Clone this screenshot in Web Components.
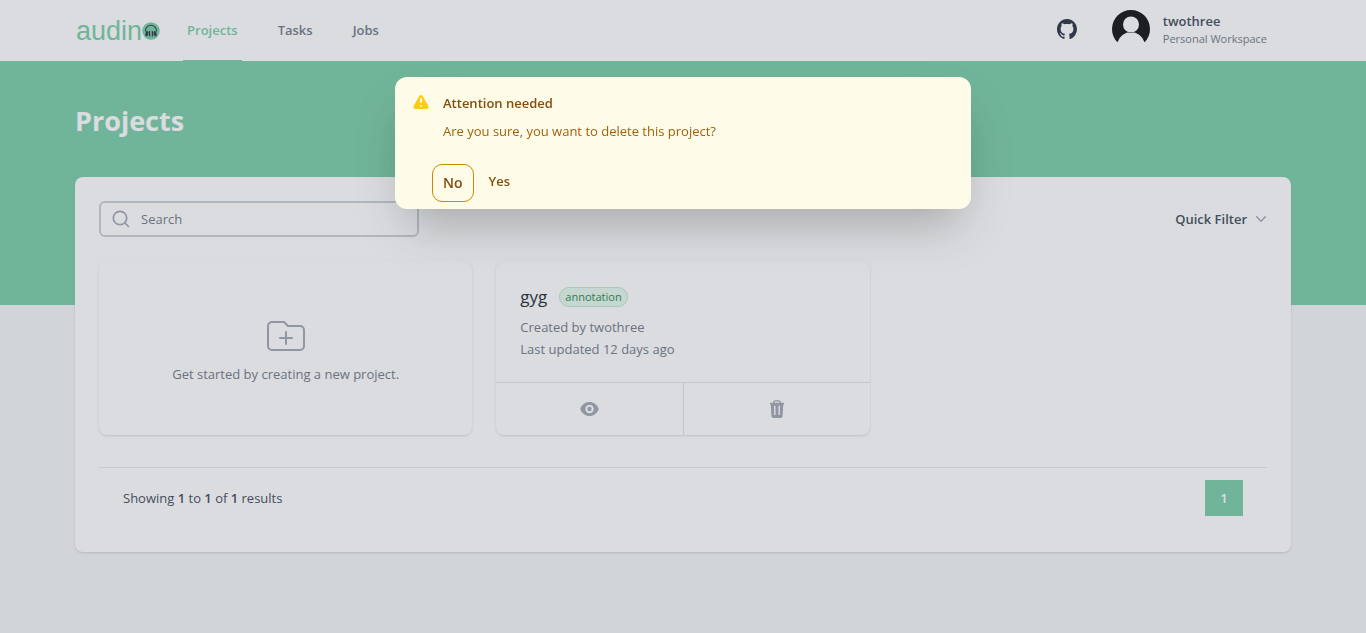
<!DOCTYPE html>
<html lang="en">
<head>
<meta charset="utf-8">
<meta name="viewport" content="width=device-width, initial-scale=1">
<title>Projects - audino</title>
<style>
  :root {
    --brand: #72cba3;
    --gray-100: #f3f4f6;
    --gray-200: #e5e7eb;
    --gray-400: #9ca3af;
    --gray-500: #6b7280;
    --gray-700: #374151;
    --gray-900: #111827;
  }
  body {
    margin: 0;
    min-height: 100vh;
    background: var(--gray-100);
    font: 13px/20px "Open Sans", "Noto Sans", sans-serif;
    color: var(--gray-700);
  }
</style>
</head>
<body>
<audino-app></audino-app>

<script>
const define = (name, html) => {
  const template = document.createElement('template');
  template.innerHTML = html;
  customElements.define(name, class extends HTMLElement {
    constructor() {
      super();
      this.attachShadow({ mode: 'open' }).append(template.content.cloneNode(true));
    }
  });
};

define('audino-logo', `
  <style>
    :host { display: block; }
    a { display: flex; align-items: center; color: var(--brand); text-decoration: none;
        font: 27px/28px "Liberation Sans", Arial, sans-serif; }
    svg { display: block; width: 18px; height: 18px; }
  </style>
  <a href="#" aria-label="audino home"><span>audin</span>
    <svg viewBox="0 0 18 18" aria-hidden="true">
      <circle cx="9" cy="9" r="8.7" fill="var(--brand)"/>
      <path d="M3.500 9.500V8.700a5.500 5.500 0 0 1 11 0v.8" fill="none" stroke="#262b36" stroke-width="1.100"/>
      <ellipse cx="4.900" cy="11.700" rx="1.500" ry="2.700" fill="#262b36" transform="rotate(12 4.900 11.700)"/>
      <rect x="6.900" y="8.900" width="1.300" height="5.600" rx=".6" fill="#262b36"/>
      <rect x="9.800" y="8.900" width="1.300" height="5.600" rx=".6" fill="#262b36"/>
      <ellipse cx="13.100" cy="11.700" rx="1.500" ry="2.700" fill="#262b36" transform="rotate(-12 13.100 11.700)"/>
    </svg></a>`);

define('nav-tab', `
  <style>
    :host { display: flex; }
    a { display: flex; align-items: center; padding: 0 4px; color: var(--gray-500);
        font-weight: 600; text-decoration: none; border-bottom: 1px solid transparent; }
    :host([active]) a { color: var(--brand); border-color: var(--brand); }
  </style>
  <a href="#"><slot></slot></a>`);

define('user-menu', `
  <style>
    :host { display: block; }
    button { display: flex; align-items: center; gap: 12px; padding: 0; border: 0;
             background: none; font: inherit; text-align: left; }
    svg { width: 40px; height: 40px; }
    .text { display: block; padding-top: 2px; }
    .name { display: block; font-weight: 600; line-height: 18px; color: var(--gray-700); }
    .space { display: block; font-size: 11px; line-height: 18px; color: var(--gray-500); }
  </style>
  <button type="button">
    <svg viewBox="0 0 40 40" aria-hidden="true">
      <path fill="#020204" fill-rule="evenodd" d="M6.500 33.350A19 19 0 1 1 33.500 33.350A14 14 0 0 0 6.500 33.350ZM20 7.500a8 8 0 1 0 0 16a8 8 0 0 0 0-16Z"/>
    </svg>
    <span class="text"><span class="name"><slot name="name"></slot></span><span class="space"><slot name="space"></slot></span></span>
  </button>`);

define('site-header', `
  <style>
    :host { display: block; background: #fff; }
    .bar { display: flex; box-sizing: border-box; height: 61px; max-width: 1280px; margin: 0 auto; padding: 0 56px 0 33px; }
    audino-logo { align-self: center; margin-right: 23px; }
    nav { display: flex; gap: 32px; }
    .right { display: flex; align-items: center; gap: 34px; margin-left: auto; padding-bottom: 3px; }
    .git { display: block; color: #1b2436; }
    .git svg { display: block; width: 20px; height: 20px; }
  </style>
  <div class="bar">
    <audino-logo></audino-logo>
    <nav aria-label="Main">
      <nav-tab active>Projects</nav-tab><nav-tab>Tasks</nav-tab><nav-tab>Jobs</nav-tab>
    </nav>
    <div class="right">
      <a class="git" href="#" aria-label="GitHub"><svg viewBox="0 0 24 24" fill="currentColor" aria-hidden="true"><path fill-rule="evenodd" clip-rule="evenodd" d="M12 0C5.37 0 0 5.506 0 12.303c0 5.445 3.435 10.043 8.205 11.674.6.107.825-.262.825-.585 0-.292-.015-1.261-.015-2.291C6 21.67 5.22 20.346 4.98 19.654c-.135-.354-.72-1.446-1.23-1.738-.42-.23-1.02-.8-.015-.815.945-.015 1.62.892 1.845 1.261 1.08 1.86 2.805 1.338 3.495 1.015.105-.8.42-1.338.765-1.645-2.67-.308-5.46-1.37-5.46-6.075 0-1.338.465-2.446 1.23-3.307-.12-.308-.54-1.569.12-3.26 0 0 1.005-.323 3.3 1.26.96-.276 1.98-.415 3-.415s2.04.139 3 .416c2.295-1.6 3.3-1.261 3.3-1.261.66 1.691.24 2.952.12 3.26.765.861 1.23 1.953 1.23 3.307 0 4.721-2.805 5.767-5.475 6.075.435.384.81 1.122.81 2.276 0 1.645-.015 2.968-.015 3.383 0 .323.225.707.825.585a12.047 12.047 0 0 0 5.919-4.489A12.537 12.537 0 0 0 24 12.304C24 5.505 18.63 0 12 0Z"/></svg></a>
      <user-menu><span slot="name">twothree</span><span slot="space">Personal Workspace</span></user-menu>
    </div>
  </div>`);

define('search-box', `
  <style>
    :host { display: block; width: 320px; }
    .field { display: flex; align-items: center; gap: 10px; box-sizing: border-box; height: 36px;
             padding: 0 10px; border: 2px solid #c7ced3; border-radius: 6px; color: var(--gray-400); }
    svg { display: block; flex: none; width: 20px; height: 20px; }
    input { flex: 1; min-width: 0; padding: 0; border: 0; outline: 0; background: none; font: inherit; color: var(--gray-700); }
    input::placeholder { color: var(--gray-500); opacity: 1; }
  </style>
  <label class="field">
    <svg viewBox="0 0 20 20" fill="none" stroke="currentColor" stroke-width="1.700" stroke-linecap="round" aria-hidden="true"><circle cx="9" cy="9" r="6.700"/><path d="m14 14 3.500 3.500"/></svg>
    <input type="search" aria-label="Search" placeholder="Search">
  </label>`);

define('quick-filter', `
  <style>
    :host { display: block; }
    button { display: flex; align-items: center; gap: 4px; padding: 0; border: 0; background: none;
             font: inherit; font-weight: 600; color: var(--gray-700); }
    svg { display: block; width: 20px; height: 20px; margin-right: -4px; color: var(--gray-400); }
  </style>
  <button type="button"><slot></slot>
    <svg viewBox="0 0 20 20" fill="currentColor" aria-hidden="true"><path fill-rule="evenodd" d="M5.23 7.21a.75.75 0 0 1 1.06.02L10 11.168l3.71-3.938a.75.75 0 1 1 1.08 1.04l-4.25 4.5a.75.75 0 0 1-1.08 0l-4.25-4.5a.75.75 0 0 1 .02-1.06Z"/></svg>
  </button>`);

define('new-project-card', `
  <style>
    :host { display: grid; border-radius: 8px; box-shadow: 0 1px 3px rgba(0,0,0,.1), 0 1px 2px rgba(0,0,0,.06); }
    button { display: flex; flex-direction: column; align-items: center; justify-content: center; gap: 4px;
             border: 0; padding: 0; background: none; font: inherit; color: var(--gray-500); }
    svg { display: block; width: 48px; height: 48px; color: var(--gray-400); }
  </style>
  <button type="button">
    <svg viewBox="0 0 24 24" fill="none" stroke="currentColor" aria-hidden="true"><path stroke-linecap="round" stroke-linejoin="round" d="M9 13h6m-3-3v6m-9 1V7a2 2 0 0 1 2-2h6l2 2h6a2 2 0 0 1 2 2v8a2 2 0 0 1-2 2H5a2 2 0 0 1-2-2Z"/></svg>
    <slot></slot>
  </button>`);

define('project-card', `
  <style>
    :host { display: block; border-radius: 8px; box-shadow: 0 1px 3px rgba(0,0,0,.1), 0 1px 2px rgba(0,0,0,.06); }
    .body { padding: 24px 24px 22px; line-height: 22px; color: var(--gray-500); }
    header { display: flex; align-items: center; gap: 12px; height: 24px; margin-bottom: 7px; }
    h2 { margin: 0; font-size: 17px; line-height: 24px; font-weight: 500; color: var(--gray-900); }
    .tag { padding: 0 5px; border: 1px solid #b9e6cb; border-radius: 10px; background: #e4f8ec;
           font-size: 11px; line-height: 18px; font-weight: 500; color: #15803d; }
    p { margin: 0; }
    .actions { display: grid; grid-template-columns: 1fr 1fr; border-top: 1px solid #e0e2ea; }
    button { display: flex; align-items: center; justify-content: center; height: 52px; padding: 0;
             border: 0; background: none; color: var(--gray-400); }
    button + button { border-left: 1px solid #e0e2ea; }
    svg { display: block; width: 20px; height: 20px; }
  </style>
  <div class="body">
    <header><h2><slot name="title"></slot></h2><span class="tag"><slot name="tag"></slot></span></header>
    <p><slot name="author"></slot></p>
    <p><slot name="updated"></slot></p>
  </div>
  <div class="actions">
    <button type="button" aria-label="View project"><svg viewBox="0 0 20 20" fill="currentColor" aria-hidden="true"><path fill-rule="evenodd" d="M9.500 3C5.300 3 1.700 5.700.2 10c1.500 4.300 5.100 7 9.300 7s7.800-2.700 9.300-7C17.300 5.700 13.700 3 9.500 3Zm0 2.800a4.200 4.200 0 1 1 0 8.400 4.200 4.200 0 0 1 0-8.400Z"/><circle cx="9.500" cy="10" r="2.200"/></svg></button>
    <button type="button" aria-label="Delete project"><svg viewBox="0 0 20 20" aria-hidden="true"><path d="M6.700 4V3.200c0-.8.600-1.400 1.400-1.400h3.800c.8 0 1.400.6 1.400 1.400V4" fill="none" stroke="currentColor" stroke-width="1.300"/><path fill="currentColor" fill-rule="evenodd" d="M3 3.800h14v1.600h-.7l-.8 11.800c-.1 1-.8 1.700-1.800 1.700H6.300c-1 0-1.700-.7-1.800-1.700L3.700 5.400H3Zm4.100 3v9.200h1.400V6.800Zm4.400 0v9.200h1.400V6.800Z"/></svg></button>
  </div>`);

define('page-footer', `
  <style>
    :host { display: flex; align-items: center; justify-content: space-between; padding: 12px 24px; border-top: 1px solid var(--gray-200); }
    p { margin: 0; }
    b { font-weight: 600; }
    button { width: 38px; height: 36px; padding: 0; border: 0; background: var(--brand); color: #fff; font: inherit; font-weight: 600; }
  </style>
  <p>Showing <b>1</b> to <b>1</b> of <b>1</b> results</p>
  <nav aria-label="Pagination"><button type="button" aria-current="page">1</button></nav>`);

define('confirm-dialog', `
  <style>
    :host { position: fixed; inset: 0; display: block; padding: 77px 16px 16px; background: rgba(107,114,128,.25); }
    dialog { position: static; display: block; box-sizing: border-box; max-width: 576px; width: 100%; margin: 0 auto;
             padding: 16px 16px 7px; border: 0; border-radius: 12px; background: #fefce8; color: #854d0e;
             box-shadow: 0 25px 50px -12px rgba(0,0,0,.25); }
    .message { display: flex; gap: 12px; }
    svg { display: block; flex: none; width: 20px; height: 20px; color: #facc15; }
    h2 { margin: 0 0 8px; font-size: 13px; line-height: 20px; font-weight: 600; }
    p { margin: 0; color: #a16207; }
    .actions { display: flex; align-items: center; gap: 4px; margin-top: 23px; padding-left: 21px; }
    button { height: 38px; padding: 0 10px; border: 1px solid transparent; border-radius: 10px; background: none;
             font: inherit; font-weight: 600; color: inherit; }
    .no { border-color: #ca8a04; font-size: 14px; }
    .yes { height: 34px; align-self: start; }
  </style>
  <dialog open aria-labelledby="t">
    <div class="message">
      <svg viewBox="0 0 20 20" fill="currentColor" aria-hidden="true"><path fill-rule="evenodd" d="M8.257 3.099c.765-1.360 2.722-1.360 3.486 0l5.580 9.920c.750 1.334-.213 2.980-1.742 2.980H4.420c-1.530 0-2.493-1.646-1.743-2.980l5.580-9.920ZM11 13a1 1 0 1 1-2 0 1 1 0 0 1 2 0Zm-1-8a1 1 0 0 0-1 1v3a1 1 0 0 0 2 0V6a1 1 0 0 0-1-1Z"/></svg>
      <div><h2 id="t"><slot name="title"></slot></h2><p><slot></slot></p></div>
    </div>
    <div class="actions"><button class="no" type="button">No</button><button class="yes" type="button">Yes</button></div>
  </dialog>`);

define('audino-app', `
  <style>
    :host { display: block; }
    .band { padding: 42px 32px 166px; background: var(--brand); }
    .wrap { max-width: 1216px; margin: 0 auto; }
    h1 { margin: 0; font-size: 27px; line-height: 36px; font-weight: 700; color: #fff; }
    main { margin-top: -128px; padding: 0 32px 48px; }
    .panel { box-sizing: border-box; padding: 24px; border-radius: 8px; background: #fff;
             box-shadow: 0 1px 3px rgba(0,0,0,.1), 0 1px 2px rgba(0,0,0,.06); }
    .tools { display: flex; align-items: center; justify-content: space-between; }
    .cards { display: grid; grid-template-columns: repeat(3, 1fr); gap: 24px; margin: 24px 0 32px; }
  </style>
  <site-header></site-header>
  <div class="band"><div class="wrap"><h1>Projects</h1></div></div>
  <main>
    <div class="wrap panel">
      <div class="tools"><search-box></search-box><quick-filter>Quick Filter</quick-filter></div>
      <div class="cards">
        <new-project-card>Get started by creating a new project.</new-project-card>
        <project-card>
          <span slot="title">gyg</span><span slot="tag">annotation</span>
          <span slot="author">Created by twothree</span><span slot="updated">Last updated 12 days ago</span>
        </project-card>
      </div>
      <page-footer></page-footer>
    </div>
  </main>
  <confirm-dialog><span slot="title">Attention needed</span>Are you sure, you want to delete this project?</confirm-dialog>`);
</script>
</body>
</html>
